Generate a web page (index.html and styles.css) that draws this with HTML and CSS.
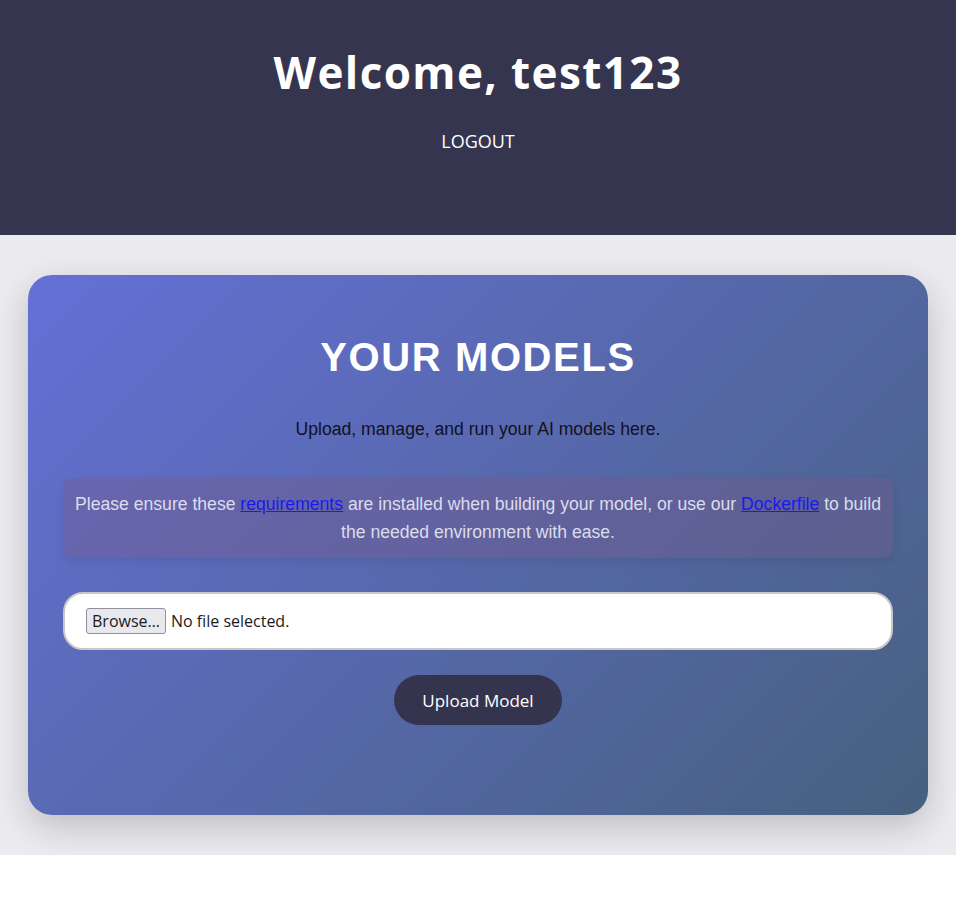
FILE: index.html
```html
<!DOCTYPE html>
<html lang="en">
<head>
<meta charset="utf-8">
<title>Your Models</title>
<link rel="stylesheet" href="styles.css">
</head>
<body>
<header class="site-header">
  <h1 class="welcome">Welcome, test123</h1>
  <a class="logout" href="#">LOGOUT</a>
</header>
<main class="main">
  <section class="card">
    <h2 class="card-title">YOUR MODELS</h2>
    <p class="card-sub">Upload, manage, and run your AI models here.</p>
    <div class="notice">
      Please ensure these <a href="#">requirements</a> are installed when building your model, or use our <a href="#">Dockerfile</a> to build the needed environment with ease.
    </div>
    <form class="upload-form">
      <label class="file-field">
        <input class="file-input" type="file">
        <span class="browse">Browse…</span>
        <span class="file-status">No file selected.</span>
      </label>
      <button class="upload-btn" type="button">Upload Model</button>
    </form>
  </section>
</main>
</body>
</html>
```
FILE: styles.css
```css
html, body {
  margin: 0;
  padding: 0;
  background: #ffffff;
}
body {
  font-family: "Liberation Sans", Arial, sans-serif;
}
.site-header {
  background: #36354f;
  height: 235px;
  box-sizing: border-box;
  padding-top: 40px;
  display: flex;
  flex-direction: column;
  align-items: center;
}
.welcome {
  margin: 0;
  font-family: "Open Sans", sans-serif;
  font-weight: 700;
  font-size: 44px;
  letter-spacing: 1.4px;
  line-height: 64px;
  color: #ffffff;
}
.logout {
  margin-top: 24px;
  font-family: "Open Sans", sans-serif;
  font-size: 18px;
  line-height: 26px;
  color: #ffffff;
  text-decoration: none;
}
.main {
  background: #ecebf0;
  padding: 40px 28px;
}
.card {
  max-width: 900px;
  margin: 0 auto;
  box-sizing: border-box;
  min-height: 540px;
  padding: 56px 35px 40px;
  border-radius: 24px;
  background: linear-gradient(135deg, #6570d6 0%, #47607f 100%);
  box-shadow: 0 12px 36px rgba(0, 0, 0, 0.2);
  text-align: center;
}
.card-title {
  margin: 0;
  font-size: 40px;
  line-height: 52px;
  letter-spacing: 1.6px;
  font-weight: 700;
  color: #ffffff;
}
.card-sub {
  margin: 33px 0 0;
  font-size: 17.6px;
  line-height: 26px;
  color: #111122;
}
.notice {
  margin-top: 36px;
  padding: 12px 10px;
  border-radius: 10px;
  background: rgba(115, 90, 140, 0.42);
  box-shadow: 0 4px 10px rgba(0, 0, 0, 0.08);
  color: #dcdcec;
  font-size: 17.6px;
  line-height: 28px;
}
.notice a {
  color: #1a1aee;
}
.upload-form {
  margin-top: 34px;
  display: flex;
  flex-direction: column;
  align-items: center;
}
.file-field {
  align-self: stretch;
  display: flex;
  align-items: center;
  gap: 5px;
  height: 58px;
  box-sizing: border-box;
  padding: 0 21px;
  background: #ffffff;
  border: 2px solid #c8c8c8;
  border-radius: 20px;
  font-family: "Open Sans", sans-serif;
  font-size: 16px;
  color: #1a1a1a;
  cursor: pointer;
}
.file-input {
  display: none;
}
.browse {
  padding: 1px 5px;
  border: 1px solid #8f8f9d;
  border-radius: 3px;
  background: #e9e9ed;
  line-height: 22px;
}
.upload-btn {
  margin-top: 25px;
  width: 168px;
  height: 50px;
  border: none;
  border-radius: 25px;
  background: #35344f;
  color: #ffffff;
  font-family: "Open Sans", sans-serif;
  font-size: 17px;
  cursor: pointer;
}
```
